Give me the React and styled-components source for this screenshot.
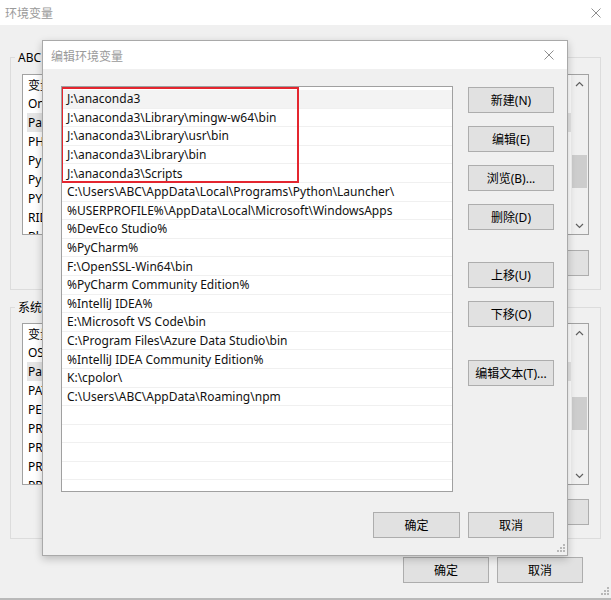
import React from "react";
import styled, { createGlobalStyle } from "styled-components";

const GlobalStyle = createGlobalStyle`
  html, body {
    margin: 0;
    padding: 0;
    background: #f0f0f0;
  }
  body {
    width: 611px;
    height: 600px;
    overflow: hidden;
    font-family: "Noto Sans", "Noto Sans CJK SC", sans-serif;
    font-size: 12px;
    color: #000;
  }
  * { box-sizing: border-box; }
`;

// Desktop / background window
const Desktop = styled.div`
  position: relative;
  width: 611px;
  height: 600px;
  overflow: hidden;
`;

const Window = styled.div`
  position: relative;
  width: 611px;
  height: 600px;
  display: flex;
  flex-direction: column;
  background: #f0f0f0;
  border-bottom: 2px solid #b9b9b9;
`;

const TitleBar = styled.div`
  height: ${p => p.h}px;
  flex: none;
  display: flex;
  align-items: center;
  justify-content: space-between;
  background: #fff;
  padding-left: ${p => p.pad}px;
  color: #9a9a9a;
  font-family: "Noto Sans CJK SC", sans-serif;
  font-size: 12px;
`;

const CloseBox = styled.div`
  width: ${p => p.w}px;
  height: 100%;
  display: flex;
  align-items: center;
  justify-content: center;
`;

const Body = styled.div`
  flex: 1;
  display: flex;
  flex-direction: column;
  padding: 0 10px;
`;

const Group = styled.div`
  border: 1px solid #dcdcdc;
  margin-top: ${p => p.top}px;
  padding: 0 11px 13px;
  display: flex;
  flex-direction: column;
`;

const GroupTitle = styled.div`
  align-self: flex-start;
  margin: -9px 0 0 -7px;
  padding: 0 3px;
  background: #f0f0f0;
  line-height: 17px;
  font-family: "Noto Sans", "Noto Sans CJK SC", sans-serif;
  font-size: 12px;
`;

const VarList = styled.div`
  margin-top: ${p => p.top}px;
  height: ${p => p.h}px;
  border: 1px solid #a2a2a2;
  background: #fff;
  display: flex;
  overflow: hidden;
`;

const VarRows = styled.div`
  flex: 1;
  display: flex;
  flex-direction: column;
  padding-left: 4px;
`;

const VarHeader = styled.div`
  height: 19px;
  flex: none;
  display: flex;
  align-items: center;
  padding-left: 1px;
`;

const VarRow = styled.div`
  height: 19px;
  flex: none;
  display: flex;
  align-items: center;
  padding-left: 1px;
  background: ${p => (p.sel ? "#e5e5e5" : "transparent")};
`;

const Col = styled.span`
  width: ${p => p.w}px;
  white-space: nowrap;
  overflow: hidden;
`;

const ScrollBar = styled.div`
  width: 17px;
  flex: none;
  display: flex;
  flex-direction: column;
  background: #f0f0f0;
`;

const ScrollArrow = styled.div`
  height: 17px;
  flex: none;
  display: flex;
  align-items: center;
  justify-content: center;
`;

const ScrollTrack = styled.div`
  flex: 1;
  display: flex;
  flex-direction: column;
  padding: 0 1px;
`;

const Thumb = styled.div`
  height: ${p => p.h}px;
  background: #cdcdcd;
`;

const ButtonRow = styled.div`
  display: flex;
  justify-content: flex-end;
  gap: 8px;
  margin-top: ${p => p.top}px;
  padding-right: ${p => p.right || 0}px;
`;

const Button = styled.div`
  width: ${p => p.w || 86}px;
  height: 26px;
  flex: none;
  display: flex;
  align-items: center;
  justify-content: center;
  background: #e1e1e1;
  border: 1px solid #adadad;
  font-family: "Noto Sans", "Noto Sans CJK SC", sans-serif;
  font-size: 12px;
  color: #000;
  white-space: nowrap;
`;

const Grip = styled.svg`
  position: absolute;
  right: ${p => p.r}px;
  bottom: ${p => p.b}px;
`;

// Dialog
const Dialog = styled.div`
  position: absolute;
  left: 42px;
  top: 40px;
  width: 526px;
  height: 516px;
  display: flex;
  flex-direction: column;
  background: #f0f0f0;
  border: 1px solid #a9a9a9;
  box-shadow: 0 3px 8px rgba(0, 0, 0, 0.22);
`;

const DialogBody = styled.div`
  flex: 1;
  display: flex;
  flex-direction: column;
  padding: 17px 13px 0 18px;
`;

const DialogMain = styled.div`
  display: grid;
  grid-template-columns: 392px 86px;
  column-gap: 15px;
`;

const PathList = styled.div`
  position: relative;
  height: 406px;
  border: 1px solid #a0a0a0;
  background: #fff;
  padding-top: 3px;
  overflow: hidden;
`;

const PathRow = styled.div`
  height: 18.6px;
  display: flex;
  align-items: center;
  padding-left: 5px;
  border-bottom: 1px solid #f0f0f0;
  background: ${p => (p.sel ? "#f3f3f3" : "#fff")};
  white-space: nowrap;
  color: #111;
`;

const Highlight = styled.div`
  position: absolute;
  left: -1px;
  top: 0;
  width: 238px;
  height: 96px;
  border: 2px solid #e4262f;
`;

const SideButtons = styled.div`
  display: flex;
  flex-direction: column;
  padding-top: 1px;
`;

const SideButton = styled(Button)`
  margin-top: ${p => p.gap}px;
`;

const DialogFooter = styled.div`
  display: flex;
  justify-content: flex-end;
  gap: 8px;
  margin-top: 20px;
`;

const CloseIcon = ({ size = 10, color = "#8e8e8e" }) => (
  <svg width={size} height={size} viewBox="0 0 10 10">
    <path d="M0.5 0.5 L9.5 9.5 M9.5 0.5 L0.5 9.5" stroke={color} strokeWidth="1" />
  </svg>
);

const Chevron = ({ up }) => (
  <svg width="9" height="6" viewBox="0 0 9 6">
    <path
      d={up ? "M1 5 L4.5 1.5 L8 5" : "M1 1 L4.5 4.5 L8 1"}
      stroke="#606060"
      strokeWidth="1.2"
      fill="none"
    />
  </svg>
);

const GripDots = ({ r, b }) => (
  <Grip r={r} b={b} width="10" height="10" viewBox="0 0 10 10">
    {[
      [8, 0], [8, 3], [5, 3], [8, 6], [5, 6], [2, 6]
    ].map(([x, y], i) => (
      <rect key={i} x={x} y={y + 1} width="2" height="2" fill="#b8b8b8" />
    ))}
  </Grip>
);

const userVars = [
  "OneDrive", "Path", "PHPSTORM", "PyCharm", "PyCharm Community Edition",
  "PYTHONPATH", "RIDER", "BlueJ"
];
const systemVars = [
  "OS", "Path", "PATHEXT", "PERL5LIB", "PROCESSOR_ARCHITECTURE",
  "PROCESSOR_IDENTIFIER", "PROCESSOR_LEVEL", "PROCESSOR_REVISION"
];

const paths = [
  "J:\\anaconda3",
  "J:\\anaconda3\\Library\\mingw-w64\\bin",
  "J:\\anaconda3\\Library\\usr\\bin",
  "J:\\anaconda3\\Library\\bin",
  "J:\\anaconda3\\Scripts",
  "C:\\Users\\ABC\\AppData\\Local\\Programs\\Python\\Launcher\\",
  "%USERPROFILE%\\AppData\\Local\\Microsoft\\WindowsApps",
  "%DevEco Studio%",
  "%PyCharm%",
  "F:\\OpenSSL-Win64\\bin",
  "%PyCharm Community Edition%",
  "%IntelliJ IDEA%",
  "E:\\Microsoft VS Code\\bin",
  "C:\\Program Files\\Azure Data Studio\\bin",
  "%IntelliJ IDEA Community Edition%",
  "K:\\cpolor\\",
  "C:\\Users\\ABC\\AppData\\Roaming\\npm",
  "", "", "", "", ""
];

const sideButtons = [
  { label: "新建(N)", gap: 0 },
  { label: "编辑(E)", gap: 13 },
  { label: "浏览(B)...", gap: 13 },
  { label: "删除(D)", gap: 13 },
  { label: "上移(U)", gap: 32 },
  { label: "下移(O)", gap: 13 },
  { label: "编辑文本(T)...", gap: 33 }
];

function VariableList({ top, h, thumbTop, thumbH, names, selected }) {
  return (
    <VarList top={top} h={h}>
      <VarRows>
        <VarHeader>
          <Col w={160}>变量</Col>
          <Col w={300}>值</Col>
        </VarHeader>
        {names.map((n, i) => (
          <VarRow key={n + i} sel={i === selected}>
            <Col w={160}>{n}</Col>
          </VarRow>
        ))}
      </VarRows>
      <ScrollBar>
        <ScrollArrow><Chevron up /></ScrollArrow>
        <ScrollTrack>
          <Thumb h={thumbH} style={{ marginTop: thumbTop }} />
        </ScrollTrack>
        <ScrollArrow><Chevron /></ScrollArrow>
      </ScrollBar>
    </VarList>
  );
}

export default function App() {
  return (
    <Desktop>
      <GlobalStyle />
      <Window>
        <TitleBar h={25} pad={5}>
          <span>环境变量</span>
          <CloseBox w={30}><CloseIcon /></CloseBox>
        </TitleBar>
        <Body>
          <Group top={32}>
            <GroupTitle>ABC 的用户变量(U)</GroupTitle>
            <VariableList top={8} h={161} thumbTop={63} thumbH={33} names={userVars} selected={1} />
            <ButtonRow top={15}>
              <Button>新建(N)...</Button>
              <Button>编辑(E)...</Button>
              <Button>删除(D)</Button>
            </ButtonRow>
          </Group>
          <Group top={17}>
            <GroupTitle>系统变量(S)</GroupTitle>
            <VariableList top={7} h={162} thumbTop={56} thumbH={33} names={systemVars} selected={1} />
            <ButtonRow top={14}>
              <Button>新建(W)...</Button>
              <Button>编辑(I)...</Button>
              <Button>删除(L)</Button>
            </ButtonRow>
          </Group>
          <ButtonRow top={18} right={18}>
            <Button>确定</Button>
            <Button>取消</Button>
          </ButtonRow>
        </Body>
        <GripDots r={2} b={2} />
      </Window>

      <Dialog>
        <TitleBar h={28} pad={8}>
          <span>编辑环境变量</span>
          <CloseBox w={36}><CloseIcon /></CloseBox>
        </TitleBar>
        <DialogBody>
          <DialogMain>
            <PathList>
              {paths.map((p, i) => (
                <PathRow key={i} sel={i === 0}>{p}</PathRow>
              ))}
              <Highlight />
            </PathList>
            <SideButtons>
              {sideButtons.map(b => (
                <SideButton key={b.label} gap={b.gap}>{b.label}</SideButton>
              ))}
            </SideButtons>
          </DialogMain>
          <DialogFooter>
            <Button w={87}>确定</Button>
            <Button>取消</Button>
          </DialogFooter>
        </DialogBody>
        <GripDots r={2} b={2} />
      </Dialog>
    </Desktop>
  );
}
